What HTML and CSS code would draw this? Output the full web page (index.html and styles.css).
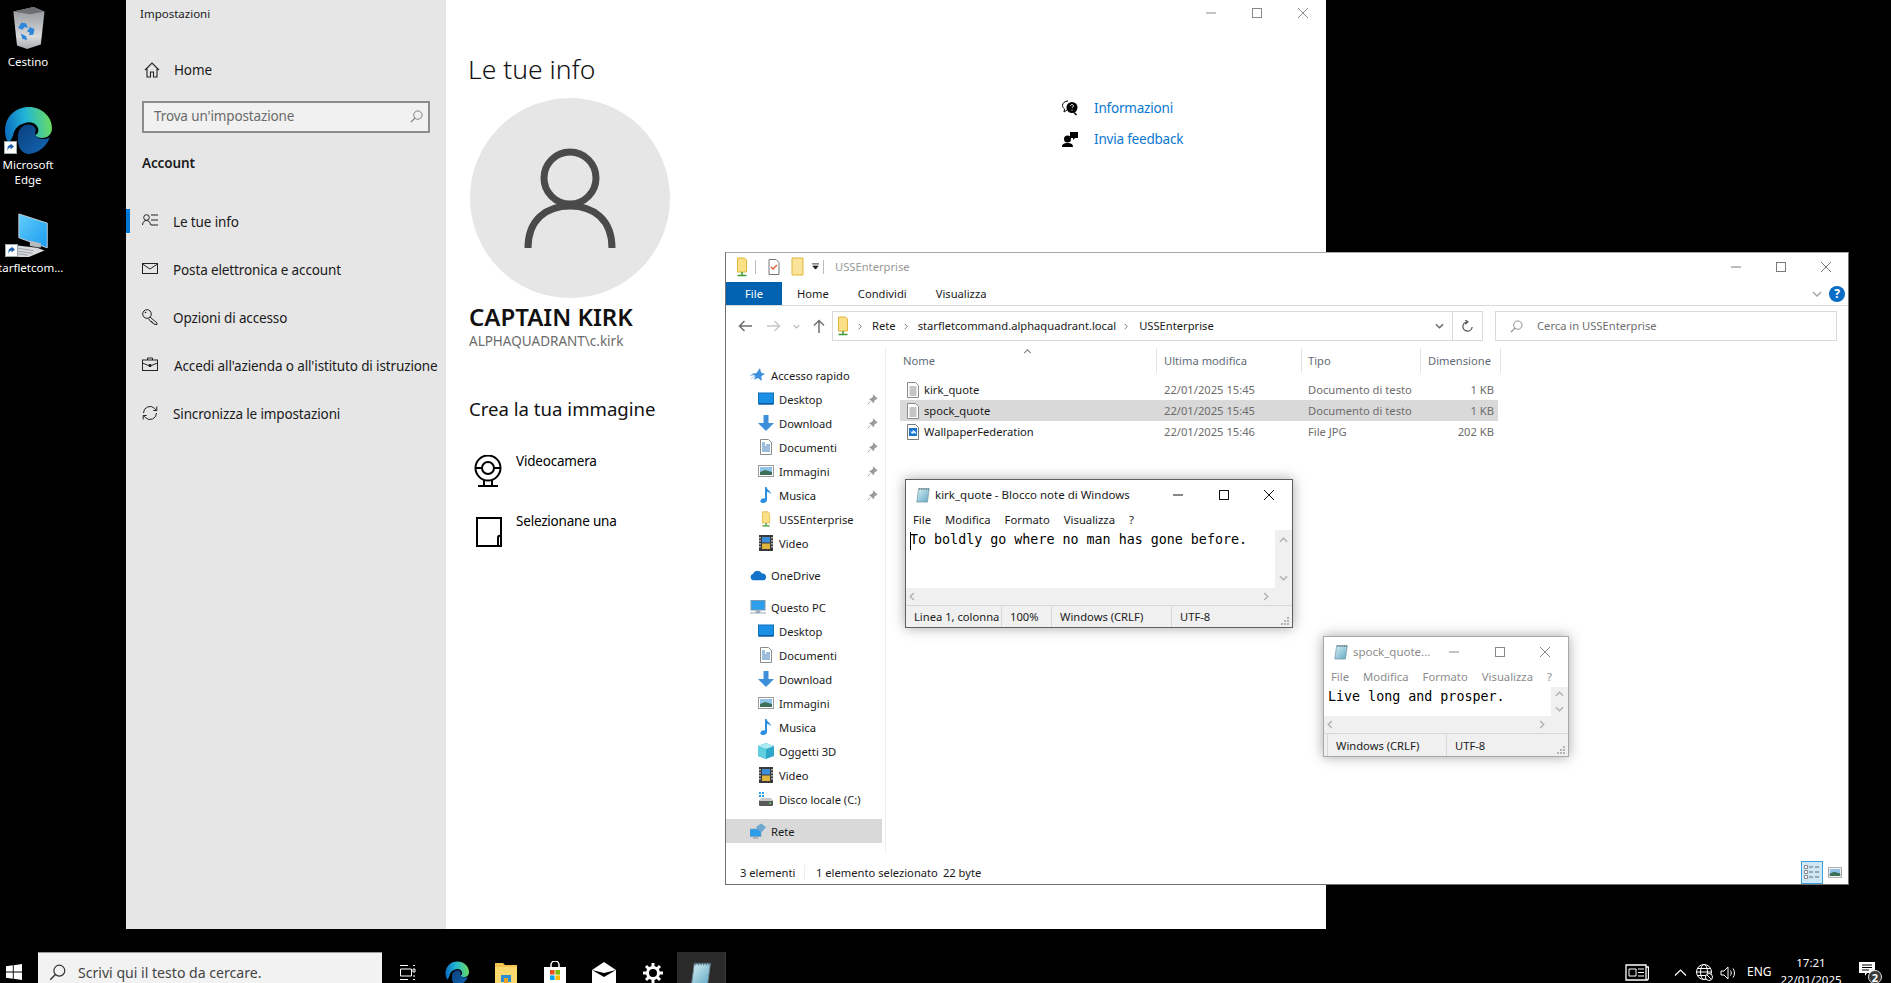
FILE: index.html
```html
<!DOCTYPE html>
<html lang="it">
<head>
<meta charset="utf-8">
<title>Desktop</title>
<link rel="stylesheet" href="styles.css">
</head>
<body>
<svg class="defs" width="0" height="0" aria-hidden="true">
  <defs>
    <linearGradient id="edgeTop" x1="0" y1="0.5" x2="1" y2="0.4"><stop offset="0" stop-color="#0c6fc0"/><stop offset="0.45" stop-color="#22b5d8"/><stop offset="1" stop-color="#6bdc5e"/></linearGradient>
    <linearGradient id="edgeLow" x1="0" y1="0" x2="1" y2="1"><stop offset="0" stop-color="#0a3f7c"/><stop offset="1" stop-color="#1368b5"/></linearGradient>
    <linearGradient id="screenGrad" x1="0" y1="0" x2="1" y2="1"><stop offset="0" stop-color="#63cdfb"/><stop offset="1" stop-color="#1a9bef"/></linearGradient>
    <linearGradient id="noteGrad" x1="0" y1="0" x2="1" y2="1"><stop offset="0" stop-color="#d6eef5"/><stop offset="1" stop-color="#62a9c4"/></linearGradient>
    <linearGradient id="binGrad" x1="0" y1="0" x2="0" y2="1"><stop offset="0" stop-color="#8d9195"/><stop offset="0.7" stop-color="#d8dadc"/><stop offset="1" stop-color="#a9acaf"/></linearGradient>
    <symbol id="i-file" viewBox="0 0 14 16"><path d="M1.5.5h8l3 3v12h-11z" fill="#fff" stroke="#8a8a8a"/><path d="M3.500 5h7M3.500 7h7M3.500 9h7M3.500 11h7M3.500 13h7" stroke="#8a8a8a"/></symbol>
    <symbol id="i-jpg" viewBox="0 0 14 16"><path d="M1.5.5h8l3 3v12h-11z" fill="#fff" stroke="#7a7a7a"/><rect x="3" y="4" width="8" height="8" fill="#1a76c8"/><path d="M4 7l2 1 1-2 3 2v2l-2-1-2 1z" fill="#d8efff"/></symbol>
    <symbol id="i-share" viewBox="0 0 12 20"><path d="M1.500 1h7l2 2v12h-9z" fill="#fbe087" stroke="#e0b63d"/><path d="M6 15v3M1.500 18.500h9" stroke="#3d9a36" stroke-width="1.500"/></symbol>
    <symbol id="i-folder" viewBox="0 0 14 20"><path d="M1 1h11v17H1z" fill="#fbe499" stroke="#e0b63d"/></symbol>
    <symbol id="i-pin" viewBox="0 0 12 12"><path d="M7 1l4 4-1.500.5-2 2-.5 2-4-4 2-.5 2-2zM3.500 8.500L1 11" fill="#9a9a9a" stroke="#9a9a9a"/></symbol>
    <symbol id="i-star" viewBox="0 0 16 16"><path d="M10 1l1 4.500 4 1.500-3.600 2 .3 5-3.700-3-4 1.700L5.500 9 1 7l5.500-1z" fill="#3d8fdc"/><path d="M1 12l4-3M0 9l3-1" stroke="#9cc7ea"/></symbol>
    <symbol id="i-desktop" viewBox="0 0 16 14"><rect x=".5" y="1" width="15" height="11" fill="#1a8fe6" stroke="#0d70bb"/><rect x="1" y="11" width="14" height="1.500" fill="#0a5d9e"/></symbol>
    <symbol id="i-download" viewBox="0 0 16 16"><path d="M5.500 0h5v8H16l-8 8-8-8h5.500z" fill="#3d8fdc"/></symbol>
    <symbol id="i-docs" viewBox="0 0 14 16"><path d="M1.500.5h8l3 3v12h-11z" fill="#fff" stroke="#8a8a8a"/><path d="M3 4h3M3 6h3M7 6h4M3 8h8M3 10h8M3 12h8" stroke="#3a7ab8"/></symbol>
    <symbol id="i-pics" viewBox="0 0 16 12"><rect x=".5" y=".5" width="15" height="11" fill="#fff" stroke="#9a9a9a"/><rect x="2" y="2" width="12" height="8" fill="#8fc3e8"/><path d="M2 7l5-2 7 2v3H2z" fill="#3f6f58"/></symbol>
    <symbol id="i-music" viewBox="0 0 12 16"><path d="M5 0h1.500c.5 3 4.500 3.500 4.500 7.500-1-2-3-2.500-4-2.500v8c0 2-2 3-4 3s-3-1-2.500-2.500S3 11 5 11.500z" fill="#2c8fe0"/></symbol>
    <symbol id="i-video" viewBox="0 0 14 16"><rect width="14" height="16" fill="#3a3a3a"/><rect x="3" y="2" width="8" height="5.500" fill="#3d8fdc"/><rect x="3" y="8.500" width="8" height="5.500" fill="#e0b63d"/><path d="M1 2v12M13 2v12" stroke="#ccc" stroke-dasharray="1.500 1.500" stroke-width="1.500"/></symbol>
    <symbol id="i-cloud" viewBox="0 0 16 11"><path d="M4 11a3.500 3.500 0 0 1-1-6.800A5 5 0 0 1 12 4a3.500 3.500 0 0 1 1 7z" fill="#1273c9"/></symbol>
    <symbol id="i-pc" viewBox="0 0 16 14"><rect x="1" y=".5" width="14" height="9.500" fill="#2c9eec" stroke="#7a9ab0"/><path d="M6 11h4v1.500H6zM0 13h16" stroke="#9ab" fill="#9ab"/></symbol>
    <symbol id="i-3d" viewBox="0 0 16 16"><path d="M8 0l8 3v10l-8 3-8-3V3z" fill="#2ea8c8"/><path d="M8 0l8 3-8 3-8-3z" fill="#aeeaf2"/><path d="M0 3l8 3v10l-8-3z" fill="#60cfe0"/></symbol>
    <symbol id="i-drive" viewBox="0 0 16 14"><rect x="1" y="8" width="14" height="6" rx="1" fill="#5a5a5a"/><path d="M3 6h10l2 3H1z" fill="#c9c9c9"/><rect x="11" y="10.500" width="2" height="1.500" fill="#5fd35f"/><path d="M1 0h2v2H1zM4 0h2v2H4zM1 3h2v2H1zM4 3h2v2H4z" fill="#2c9eec"/></symbol>
    <symbol id="i-net" viewBox="0 0 16 16"><rect x="0" y="6" width="11" height="7.500" fill="#2c9eec" stroke="#7a9ab0" stroke-width=".6"/><path d="M3 15h5" stroke="#889"/><path d="M6 4l5-3.500 5 3.500-4 5-3-1z" fill="#6fa8cf"/></symbol>
    <symbol id="i-notepad" viewBox="0 0 18 18"><path d="M4 2h12l-2 15H2z" fill="url(#noteGrad)" stroke="#6a8a98" stroke-width=".7"/><path d="M5 1.200v2M7 1.200v2M9 1.200v2M11 1.200v2M13 1.200v2M15 1.200v2" stroke="#4d6470" stroke-width=".8"/></symbol>
    <symbol id="i-shortcut" viewBox="0 0 13 13"><rect x=".5" y=".5" width="12" height="12" fill="#fff" stroke="#9aa"/><path d="M3.500 10V7c0-2 1.500-3 3-3V2.500L10 5.500 6.500 8.500V6.500C5 6.500 4 7.500 3.500 10z" fill="#1d5fa8"/></symbol>
    <symbol id="i-search" viewBox="0 0 14 14"><circle cx="8.500" cy="5.500" r="4.500" fill="none" stroke="currentColor"/><path d="M5.300 8.700L1 13" stroke="currentColor" stroke-width="1.200"/></symbol>
    <symbol id="i-up" viewBox="0 0 10 6"><path d="M1 5l4-4 4 4" fill="none" stroke="currentColor" stroke-width="1.500"/></symbol>
    <symbol id="i-down" viewBox="0 0 10 6"><path d="M1 1l4 4 4-4" fill="none" stroke="currentColor" stroke-width="1.500"/></symbol>
    <symbol id="i-left" viewBox="0 0 6 10"><path d="M5 1L1 5l4 4" fill="none" stroke="currentColor" stroke-width="1.500"/></symbol>
    <symbol id="i-right" viewBox="0 0 6 10"><path d="M1 1l4 4-4 4" fill="none" stroke="currentColor" stroke-width="1.500"/></symbol>
    <symbol id="i-min" viewBox="0 0 12 12"><path d="M1 6h10" stroke="currentColor"/></symbol>
    <symbol id="i-max" viewBox="0 0 12 12"><rect x="1.500" y="1.500" width="9" height="9" fill="none" stroke="currentColor"/></symbol>
    <symbol id="i-close" viewBox="0 0 12 12"><path d="M1 1l10 10M11 1L1 11" stroke="currentColor"/></symbol>
    <symbol id="i-grip" viewBox="0 0 10 10"><path d="M7 1h2v2H7zM4 4h2v2H4zM7 4h2v2H7zM1 7h2v2H1zM4 7h2v2H4zM7 7h2v2H7z" fill="#b5b5b5"/></symbol>
  </defs>
</svg>

<div class="desk-icon desk-icon--bin">
  <svg class="desk-glyph" viewBox="0 0 48 48"><path d="M8 6l22-5 12 5-4 36-15 5-11-4z" fill="url(#binGrad)"/><path d="M8 6l22-5 12 5-16 3z" fill="#6c7073"/><path d="M13 24l4-6 5 1 2 5-4-1-2 3zM26 23l5 2-1 6-5 1 1-3-3-1zM16 30l6 3 1 4-5-1z" fill="#2e86d8"/></svg>
  <span class="desk-label">Cestino</span>
</div>
<div class="desk-icon desk-icon--edge">
  <div class="desk-art">
    <svg class="desk-glyph" viewBox="0 0 48 48"><path d="M1 25C1 10 12 1 25 1c13 0 23 10 23 21 0 6-4 10-10 10-3 0-6-1-7-3 3-1 4-4 3-7-2-5-8-7-13-5C13 19 10 24 9 30 6 36 3 40 4 36 2 33 1 29 1 25z" fill="url(#edgeTop)"/><path d="M14 30c0-8 7-13 13-11 4 1 6 5 4 8-1 4 4 6 9 6 3 0 5-1 6-2-3 9-11 16-21 17C16 48 13 38 14 30z" fill="url(#edgeLow)"/></svg>
    <svg class="shortcut" viewBox="0 0 13 13"><use href="#i-shortcut"/></svg>
  </div>
  <span class="desk-label">Microsoft Edge</span>
</div>
<div class="desk-icon desk-icon--net">
  <div class="desk-art">
    <svg class="desk-glyph" viewBox="0 0 48 48"><path d="M14 1l31 10v27L14 27z" fill="url(#screenGrad)" stroke="#cfd6da"/><path d="M8 35l26 3 8 3-22 9-14-5-2-7z" fill="#d7dade"/><path d="M26 30l12 3v5l-12-2z" fill="#b5bbc0"/><path d="M10 38l20 3M9 41l20 3M10 44l14 2" stroke="#9aa0a5"/></svg>
    <svg class="shortcut" viewBox="0 0 13 13"><use href="#i-shortcut"/></svg>
  </div>
  <span class="desk-label desk-label--clip">starfletcom...</span>
</div>

<section class="settings">
  <aside class="side">
    <div class="side-title">Impostazioni</div>
    <div class="side-home">
      <svg class="side-icon" viewBox="0 0 16 16"><path d="M1 8l7-7 7 7M3 6.500V15h3.500v-5h3v5H13V6.500" fill="none" stroke="#222" stroke-width="1.100"/></svg>
      <span>Home</span>
    </div>
    <div class="side-search"><span>Trova un'impostazione</span><svg class="side-search-icon" width="13" height="13"><use href="#i-search"/></svg></div>
    <div class="side-head">Account</div>
    <nav class="side-list">
      <div class="side-item side-item--on">
        <svg class="side-icon" viewBox="0 0 16 16"><circle cx="4.500" cy="4.500" r="2.800" fill="none" stroke="#222"/><path d="M.5 12c0-3 2-4.500 4-4.500s4 1.500 4 4.500M9 2h7M9 7h7M9 12h7" fill="none" stroke="#222"/></svg>
        <span>Le tue info</span>
      </div>
      <div class="side-item">
        <svg class="side-icon" viewBox="0 0 16 16"><rect x=".5" y="2.500" width="15" height="10" fill="none" stroke="#222"/><path d="M.5 3l7.500 5 7.500-5" fill="none" stroke="#222"/></svg>
        <span>Posta elettronica e account</span>
      </div>
      <div class="side-item">
        <svg class="side-icon" viewBox="0 0 16 16"><circle cx="5" cy="5" r="4.300" fill="none" stroke="#222"/><path d="M8 8l7 6v1.500h-2.500l-1-1.500H10v-1.500H8.500L6.500 9.500" fill="none" stroke="#222"/><circle cx="3.500" cy="3.500" r=".8" fill="#222"/></svg>
        <span>Opzioni di accesso</span>
      </div>
      <div class="side-item">
        <svg class="side-icon" viewBox="0 0 16 16"><rect x=".5" y="3" width="15" height="10.500" fill="none" stroke="#222"/><path d="M5.500 3V1h5v2M.5 6l6 2.500h3L15.500 6M7 7.500h2v2H7z" fill="none" stroke="#222"/></svg>
        <span class="side-wide">Accedi all'azienda o all'istituto di istruzione</span>
      </div>
      <div class="side-item">
        <svg class="side-icon" viewBox="0 0 16 16"><path d="M1.500 8a6.500 6.500 0 0 1 11-4.700l2 2M14.500 8a6.500 6.500 0 0 1-11 4.700l-2-2M14.800 1.500v4h-3.500M1.200 14.500v-4h3.500" fill="none" stroke="#222"/></svg>
        <span>Sincronizza le impostazioni</span>
      </div>
    </nav>
  </aside>
  <main class="info">
    <div class="win-btns win-btns--settings">
      <svg width="12" height="12"><use href="#i-min"/></svg>
      <svg width="12" height="12"><use href="#i-max"/></svg>
      <svg width="12" height="12"><use href="#i-close"/></svg>
    </div>
    <div class="info-body">
      <div class="info-left">
        <h1 class="info-title">Le tue info</h1>
        <div class="avatar">
          <svg class="avatar-glyph" viewBox="0 0 92 100"><circle cx="46" cy="30" r="26" fill="none" stroke="#4a4a4a" stroke-width="7"/><path d="M4 100c0-28 18-42 42-42s42 14 42 42" fill="none" stroke="#4a4a4a" stroke-width="7"/></svg>
        </div>
        <div class="user-name">CAPTAIN KIRK</div>
        <div class="user-domain">ALPHAQUADRANT\c.kirk</div>
        <h2 class="pic-title">Crea la tua immagine</h2>
        <div class="pic-opt">
          <svg class="pic-icon" viewBox="0 0 32 32"><circle cx="16" cy="13" r="12.500" fill="none" stroke="#000" stroke-width="2"/><circle cx="16" cy="13" r="6" fill="none" stroke="#000" stroke-width="2"/><path d="M3.500 13h6.500M22 13h6.500M12 25v6M20 25v6M6 31h20" stroke="#000" stroke-width="2"/></svg>
          <span>Videocamera</span>
        </div>
        <div class="pic-opt">
          <svg class="pic-icon" viewBox="0 0 32 32"><path d="M29 21V3H5v28h24v-10zM29 31h-3V23c0-3 3-3 3 0" fill="none" stroke="#000" stroke-width="2"/></svg>
          <span>Selezionane una</span>
        </div>
      </div>
      <div class="info-links">
        <a class="help-link">
          <svg class="help-icon" viewBox="0 0 16 16"><path d="M6 1C3 1 .5 3 .5 5.500c0 1.500 1 2.800 2 3.500L2 12l3-2" fill="none" stroke="#000"/><circle cx="10" cy="7.500" r="5.500"/><path d="M12 12.500l2.500 2.500" stroke="#000" stroke-width="1.500"/><path d="M8.500 6c0-2 3-2 3 0 0 1-1.500 1-1.500 2M10 9.500v1" stroke="#fff" fill="none"/></svg>
          <span>Informazioni</span>
        </a>
        <a class="help-link">
          <svg class="help-icon" viewBox="0 0 16 16"><circle cx="5.500" cy="8" r="3.500"/><path d="M0 16c0-3 2-4 5.500-4s5.500 1 5.500 4zM8 1h8v6h-3l-2 2V7H8z"/></svg>
          <span>Invia feedback</span>
        </a>
      </div>
    </div>
  </main>
</section>

<section class="explorer">
  <header class="ex-title">
    <svg class="ex-q1" width="12" height="20"><use href="#i-share"/></svg>
    <span class="ex-sep"></span>
    <svg class="ex-q2" viewBox="0 0 12 16"><path d="M1 .5h7l3 3V15.500H1z" fill="#fff" stroke="#777"/><path d="M3 8l2 2 4-4" fill="none" stroke="#e0552b" stroke-width="1.300"/></svg>
    <svg class="ex-q3" width="14" height="20"><use href="#i-folder"/></svg>
    <svg class="ex-q4" viewBox="0 0 8 8"><path d="M0 1h8M1 3.500h6L4 7z" stroke="#222" fill="#222"/></svg>
    <span class="ex-sep"></span>
    <span class="ex-name">USSEnterprise</span>
    <div class="win-btns win-btns--explorer">
      <svg width="12" height="12"><use href="#i-min"/></svg>
      <svg width="12" height="12"><use href="#i-max"/></svg>
      <svg width="12" height="12"><use href="#i-close"/></svg>
    </div>
  </header>
  <div class="ex-tabs">
    <span class="ex-tab ex-tab--file">File</span>
    <span class="ex-tab ex-tab--home">Home</span>
    <span class="ex-tab ex-tab--share">Condividi</span>
    <span class="ex-tab ex-tab--view">Visualizza</span>
    <svg class="ex-collapse" width="10" height="6"><use href="#i-down"/></svg>
    <span class="ex-help">?</span>
  </div>
  <div class="ex-bar">
    <svg class="ex-arrow" viewBox="0 0 14 12"><path d="M14 6H1.500M6.500 1L1.500 6l5 5" fill="none" stroke="#6e6e6e" stroke-width="1.500"/></svg>
    <svg class="ex-arrow ex-arrow--off" viewBox="0 0 14 12"><path d="M0 6h12.500M7.500 1l5 5-5 5" fill="none" stroke="#c8c8c8" stroke-width="1.500"/></svg>
    <svg class="ex-recent" width="7" height="5"><use href="#i-down"/></svg>
    <svg class="ex-arrow ex-arrow--up" viewBox="0 0 12 14"><path d="M6 14V1.500M1 6.500l5-5 5 5" fill="none" stroke="#6e6e6e" stroke-width="1.500"/></svg>
    <div class="ex-path">
      <svg class="ex-path-icon" width="12" height="20"><use href="#i-share"/></svg>
      <svg class="crumb" width="4" height="7"><use href="#i-right"/></svg>
      <span class="ex-crumb-text">Rete</span>
      <svg class="crumb" width="4" height="7"><use href="#i-right"/></svg>
      <span class="ex-crumb-text">starfletcommand.alphaquadrant.local</span>
      <svg class="crumb crumb--last" width="4" height="7"><use href="#i-right"/></svg>
      <span class="ex-crumb-text">USSEnterprise</span>
      <span class="ex-path-fill"></span>
      <svg class="ex-path-drop" width="9" height="6"><use href="#i-down"/></svg>
      <span class="ex-path-refresh">
        <svg width="13" height="13" viewBox="0 0 14 14"><path d="M12 7.500a5 5 0 1 1-5-5.500M4.500 0l3 2-3 2.500" fill="none" stroke="#555" stroke-width="1.300"/></svg>
      </span>
    </div>
    <div class="ex-search"><svg width="13" height="13"><use href="#i-search"/></svg><span class="ex-crumb-text">Cerca in USSEnterprise</span></div>
  </div>
  <div class="ex-content">
    <nav class="tree">
      <div class="tree-group">
        <div class="tree-row tree-row--root"><svg class="t-i" viewBox="0 0 16 16"><use href="#i-star"/></svg><span>Accesso rapido</span></div>
        <div class="tree-row"><svg class="t-i" viewBox="0 0 16 14"><use href="#i-desktop"/></svg><span>Desktop</span><svg class="pin" width="11" height="11"><use href="#i-pin"/></svg></div>
        <div class="tree-row"><svg class="t-i" viewBox="0 0 16 16"><use href="#i-download"/></svg><span>Download</span><svg class="pin" width="11" height="11"><use href="#i-pin"/></svg></div>
        <div class="tree-row"><svg class="t-i" viewBox="0 0 14 16"><use href="#i-docs"/></svg><span>Documenti</span><svg class="pin" width="11" height="11"><use href="#i-pin"/></svg></div>
        <div class="tree-row"><svg class="t-i" viewBox="0 0 16 12"><use href="#i-pics"/></svg><span>Immagini</span><svg class="pin" width="11" height="11"><use href="#i-pin"/></svg></div>
        <div class="tree-row"><svg class="t-i" viewBox="0 0 12 16"><use href="#i-music"/></svg><span>Musica</span><svg class="pin" width="11" height="11"><use href="#i-pin"/></svg></div>
        <div class="tree-row"><svg class="t-i" viewBox="0 0 12 20"><use href="#i-share"/></svg><span>USSEnterprise</span></div>
        <div class="tree-row"><svg class="t-i" viewBox="0 0 14 16"><use href="#i-video"/></svg><span>Video</span></div>
      </div>
      <div class="tree-group">
        <div class="tree-row tree-row--root"><svg class="t-i" viewBox="0 0 16 11"><use href="#i-cloud"/></svg><span>OneDrive</span></div>
      </div>
      <div class="tree-group">
        <div class="tree-row tree-row--root"><svg class="t-i" viewBox="0 0 16 14"><use href="#i-pc"/></svg><span>Questo PC</span></div>
        <div class="tree-row"><svg class="t-i" viewBox="0 0 16 14"><use href="#i-desktop"/></svg><span>Desktop</span></div>
        <div class="tree-row"><svg class="t-i" viewBox="0 0 14 16"><use href="#i-docs"/></svg><span>Documenti</span></div>
        <div class="tree-row"><svg class="t-i" viewBox="0 0 16 16"><use href="#i-download"/></svg><span>Download</span></div>
        <div class="tree-row"><svg class="t-i" viewBox="0 0 16 12"><use href="#i-pics"/></svg><span>Immagini</span></div>
        <div class="tree-row"><svg class="t-i" viewBox="0 0 12 16"><use href="#i-music"/></svg><span>Musica</span></div>
        <div class="tree-row"><svg class="t-i" viewBox="0 0 16 16"><use href="#i-3d"/></svg><span>Oggetti 3D</span></div>
        <div class="tree-row"><svg class="t-i" viewBox="0 0 14 16"><use href="#i-video"/></svg><span>Video</span></div>
        <div class="tree-row"><svg class="t-i" viewBox="0 0 16 14"><use href="#i-drive"/></svg><span>Disco locale (C:)</span></div>
      </div>
      <div class="tree-group">
        <div class="tree-row tree-row--root tree-row--on"><svg class="t-i" viewBox="0 0 16 16"><use href="#i-net"/></svg><span>Rete</span></div>
      </div>
    </nav>
    <div class="files">
      <svg class="sort-caret" width="9" height="5"><use href="#i-up"/></svg>
      <div class="file-grid file-grid--head">
        <span>Nome</span><span>Ultima modifica</span><span>Tipo</span><span>Dimensione</span>
      </div>
      <div class="file-grid file-grid--row">
        <span class="file-name"><svg width="14" height="16"><use href="#i-file"/></svg>kirk_quote</span><span>22/01/2025 15:45</span><span>Documento di testo</span><span class="file-size">1 KB</span>
      </div>
      <div class="file-grid file-grid--row file-grid--on">
        <span class="file-name"><svg width="14" height="16"><use href="#i-file"/></svg>spock_quote</span><span>22/01/2025 15:45</span><span>Documento di testo</span><span class="file-size">1 KB</span>
      </div>
      <div class="file-grid file-grid--row">
        <span class="file-name"><svg width="14" height="16"><use href="#i-jpg"/></svg>WallpaperFederation</span><span>22/01/2025 15:46</span><span>File JPG</span><span class="file-size">202 KB</span>
      </div>
    </div>
  </div>
  <footer class="ex-status">
    <span class="ex-count">3 elementi</span>
    <span class="ex-selected">1 elemento selezionato</span>
    <span>22 byte</span>
    <span class="ex-views">
      <span class="ex-view ex-view--on"><svg width="16" height="14" viewBox="0 0 16 14"><path d="M.5.5h3v3h-3zM.5 5.500h3v3h-3zM.5 10.500h3v3h-3z" fill="#fff" stroke="#888"/><path d="M5 2h4M11 2h4M5 7h4M11 7h4M5 12h4M11 12h4" stroke="#666"/></svg></span>
      <span class="ex-view"><svg width="14" height="11"><use href="#i-pics"/></svg></span>
    </span>
  </footer>
</section>

<section class="notepad notepad--kirk">
  <header class="np-title">
    <svg class="np-icon" width="16" height="16"><use href="#i-notepad"/></svg>
    <span class="np-name">kirk_quote - Blocco note di Windows</span>
    <div class="win-btns win-btns--np">
      <svg width="12" height="12"><use href="#i-min"/></svg>
      <svg width="12" height="12"><use href="#i-max"/></svg>
      <svg width="12" height="12"><use href="#i-close"/></svg>
    </div>
  </header>
  <div class="np-menu"><span>File</span><span>Modifica</span><span>Formato</span><span>Visualizza</span><span>?</span></div>
  <div class="np-edit">
    <div class="np-text"><span class="caret"></span>To boldly go where no man has gone before.</div>
    <div class="np-vscroll"><svg width="9" height="6"><use href="#i-up"/></svg><svg width="9" height="6"><use href="#i-down"/></svg></div>
  </div>
  <div class="np-hscroll"><svg width="6" height="9"><use href="#i-left"/></svg><svg width="6" height="9"><use href="#i-right"/></svg></div>
  <footer class="np-status">
    <span class="np-cell np-cell--pos">Linea 1, colonna</span>
    <span class="np-cell np-cell--zoom">100%</span>
    <span class="np-cell np-cell--eol">Windows (CRLF)</span>
    <span class="np-cell np-cell--enc">UTF-8</span>
    <svg class="np-grip" width="10" height="10"><use href="#i-grip"/></svg>
  </footer>
</section>

<section class="notepad notepad--spock">
  <header class="np-title">
    <svg class="np-icon" width="16" height="16"><use href="#i-notepad"/></svg>
    <span class="np-name">spock_quote...</span>
    <div class="win-btns win-btns--np">
      <svg width="12" height="12"><use href="#i-min"/></svg>
      <svg width="12" height="12"><use href="#i-max"/></svg>
      <svg width="12" height="12"><use href="#i-close"/></svg>
    </div>
  </header>
  <div class="np-menu"><span>File</span><span>Modifica</span><span>Formato</span><span>Visualizza</span><span>?</span></div>
  <div class="np-edit">
    <div class="np-text">Live long and prosper.</div>
    <div class="np-vscroll"><svg width="9" height="6"><use href="#i-up"/></svg><svg width="9" height="6"><use href="#i-down"/></svg></div>
  </div>
  <div class="np-hscroll"><svg width="6" height="9"><use href="#i-left"/></svg><svg width="6" height="9"><use href="#i-right"/></svg></div>
  <footer class="np-status">
    <span class="np-cell np-cell--lead"></span>
    <span class="np-cell np-cell--eol2">Windows (CRLF)</span>
    <span class="np-cell np-cell--enc">UTF-8</span>
    <svg class="np-grip" width="10" height="10"><use href="#i-grip"/></svg>
  </footer>
</section>

<footer class="taskbar">
  <svg class="tb-start" viewBox="0 0 16 16"><path d="M0 2.300L6.800 1.300V7.500H0zM7.700 1.200L16 0v7.500H7.700zM0 8.400h6.800v6.300L0 13.700zM7.700 8.400H16V16l-8.300-1.200z" fill="#fff"/></svg>
  <div class="tb-search"><svg class="tb-search-icon" width="17" height="17"><use href="#i-search"/></svg><span>Scrivi qui il testo da cercare.</span></div>
  <div class="tb-apps">
    <span class="tb-app"><svg width="17" height="17" viewBox="0 0 17 17"><path d="M1 1.500h8M1 15.500h8M1.500 5h11v7h-11zM14 1.500h2M14 5h2v3h-2zM14 12h2M14 15.500h2" fill="none" stroke="#fff"/></svg></span>
    <span class="tb-app"><svg width="24" height="24" viewBox="0 0 48 48"><path d="M1 25C1 10 12 1 25 1c13 0 23 10 23 21 0 6-4 10-10 10-3 0-6-1-7-3 3-1 4-4 3-7-2-5-8-7-13-5C13 19 10 24 9 30 6 36 3 40 4 36 2 33 1 29 1 25z" fill="url(#edgeTop)"/><path d="M14 30c0-8 7-13 13-11 4 1 6 5 4 8-1 4 4 6 9 6 3 0 5-1 6-2-3 9-11 16-21 17C16 48 13 38 14 30z" fill="url(#edgeLow)"/></svg></span>
    <span class="tb-app"><svg width="22" height="22" viewBox="0 0 22 22"><path d="M0 1h8l2 2h12v19H0z" fill="#f2c44e"/><path d="M0 5h22v17H0z" fill="#fbd96f"/><path d="M6 20v-7h10v7h-3v-4H9v4z" fill="#2b8fd8"/><rect x="9" y="16" width="4" height="6" fill="#e8a01e"/></svg></span>
    <span class="tb-app"><svg width="22" height="24" viewBox="0 0 22 24"><path d="M7 6V4a4 4 0 0 1 8 0v2" fill="none" stroke="#fff" stroke-width="1.500"/><path d="M0 6h22v18H0z" fill="#fff"/><rect x="6" y="9" width="4.600" height="4.600" fill="#f25022"/><rect x="11.400" y="9" width="4.600" height="4.600" fill="#7fba00"/><rect x="6" y="14.400" width="4.600" height="4.600" fill="#00a4ef"/><rect x="11.400" y="14.400" width="4.600" height="4.600" fill="#ffb900"/></svg></span>
    <span class="tb-app"><svg width="24" height="22" viewBox="0 0 24 22"><path d="M0 8L12 0l12 8v14H0z" fill="#fff"/><path d="M0 8l12 7 12-7-12 3z" fill="#000"/></svg></span>
    <span class="tb-app"><svg width="20" height="20" viewBox="0 0 20 20"><circle cx="10" cy="10" r="5.500" fill="none" stroke="#fff" stroke-width="3"/><path d="M10 0v4M10 16v4M0 10h4M16 10h4M3 3l3 3M14 14l3 3M17 3l-3 3M6 14l-3 3" stroke="#fff" stroke-width="3"/></svg></span>
    <span class="tb-app tb-app--on"><svg width="24" height="24"><use href="#i-notepad"/></svg></span>
  </div>
  <div class="tray">
    <svg class="tray-news" width="24" height="17" viewBox="0 0 24 17"><path d="M1 1h20v15H1zM21 3h2.500v11a2 2 0 0 1-2.500 2" fill="none" stroke="#fff" stroke-width="1.300"/><path d="M4 5h7v7H4zM13 5h6M13 8.500h6M13 12h6" fill="none" stroke="#fff"/></svg>
    <svg class="tray-caret" width="13" height="7" viewBox="0 0 13 7"><path d="M1 6.500l5.500-5.500 5.500 5.500" fill="none" stroke="#fff" stroke-width="1.200"/></svg>
    <svg class="tray-globe" width="17" height="17" viewBox="0 0 17 17"><circle cx="8" cy="8" r="7.500" fill="none" stroke="#fff"/><ellipse cx="8" cy="8" rx="3.500" ry="7.500" fill="none" stroke="#fff"/><path d="M.5 8h15M1.500 4.500h13M1.500 11.500h13" stroke="#fff"/><circle cx="13" cy="13" r="3.500" fill="#000" stroke="#fff"/><path d="M11 11l4 4" stroke="#fff"/></svg>
    <svg class="tray-sound" width="17" height="14" viewBox="0 0 17 14"><path d="M1 5h3l4-4v12L4 9H1z" fill="none" stroke="#fff"/><path d="M10.500 4.500c1 1.500 1 3.500 0 5M13 2.500c2 2.500 2 6.500 0 9" fill="none" stroke="#fff"/></svg>
    <span class="tray-lang">ENG</span>
    <span class="tray-clock"><span>17:21</span><span>22/01/2025</span></span>
    <span class="tray-note">
      <svg width="16" height="14" viewBox="0 0 16 14"><path d="M0 0h16v11H8l-2 3v-3H0z" fill="#fff"/><path d="M3 3h10M3 5.500h10M3 8h7" stroke="#000"/></svg>
      <span class="tray-badge">2</span>
    </span>
  </div>
</footer>
</body>
</html>
```

FILE: styles.css
```css
* { box-sizing: border-box; }
html, body { margin: 0; padding: 0; }
body {
  position: relative;
  width: 1891px;
  height: 983px;
  overflow: hidden;
  background: #000;
  font-family: "Noto Sans", "Liberation Sans", sans-serif;
  color: #000;
}
.defs { position: absolute; }
svg { display: block; flex: none; }

/* desktop icons */
.desk-icon { position: absolute; width: 72px; left: -8px; display: flex; flex-direction: column; align-items: center; text-align: center; }
.desk-icon--bin { top: 6px; }
.desk-icon--edge { top: 106px; }
.desk-icon--net { top: 213px; }
.desk-art { position: relative; }
.desk-glyph { width: 48px; height: 48px; }
.desk-icon--bin .desk-glyph { width: 44px; height: 44px; }
.desk-icon--net .desk-glyph { width: 46px; height: 44px; }
.shortcut { position: absolute; left: 0; bottom: 0; width: 13px; height: 13px; }
.desk-label { color: #fff; font-size: 11.5px; line-height: 15px; margin-top: 4px; width: 64px; }
.desk-icon--edge .desk-label { margin-top: 4px; line-height: 14.500px; }
.desk-icon--net .desk-label { margin-top: 3px; }
.desk-label--clip { white-space: nowrap; width: auto; }

/* settings */
.settings { position: absolute; left: 126px; top: 0; width: 1200px; height: 929px; display: flex; background: #fff; }
.side { width: 320px; background: #e6e6e6; position: relative; display: flex; flex-direction: column; padding-left: 16px; color: #1a1a1a; font-size: 13.500px; letter-spacing: -.13px; }
.side-title { font-size: 11.5px; height: 28px; line-height: 28px; margin-left: -2px; letter-spacing: 0; }
.side-home { display: flex; align-items: center; height: 28px; margin-top: 28px; }
.side-home span { margin-left: 14px; }
.side-home .side-icon { margin-left: 2px; }
.side-icon { width: 16px; height: 16px; }
.side-search { width: 288px; height: 32px; margin-top: 17px; border: 2px solid #8d8d8d; background: #f1f1f1; display: flex; align-items: center; justify-content: space-between; padding: 0 5px 2px 10px; color: #6a6a6a; }
.side-search-icon { color: #777; }
.side-head { font-weight: 600; margin-top: 19px; height: 22px; line-height: 22px; }
.side-list { margin-top: 24px; display: flex; flex-direction: column; }
.side-item { height: 48px; display: flex; align-items: center; gap: 15px; position: relative; }
.side-item .side-icon { margin-top: -2px; }
.side-wide { margin-left: 1px; white-space: nowrap; }
.side-item--on::before { content: ""; position: absolute; left: -16px; top: 11px; width: 4px; height: 24px; background: #0078d7; }

.info { flex: 1; display: flex; flex-direction: column; }
.win-btns { display: flex; align-items: center; color: #777; }
.win-btns--settings { height: 26px; justify-content: flex-end; gap: 34px; padding-right: 17px; color: #8a8a8a; }
.info-body { display: flex; flex: 1; }
.info-left { width: 616px; padding-left: 22px; display: flex; flex-direction: column; align-items: flex-start; }
.info-title { margin: 23px 0 0; font-size: 26.500px; font-weight: 300; line-height: 40px; color: #111; }
.avatar { width: 200px; height: 200px; margin: 9px 0 0 2px; border-radius: 50%; background: #e6e6e6; display: flex; align-items: center; justify-content: center; }
.avatar-glyph { width: 92px; height: 100px; }
.user-name { margin: 2px 0 0 1px; font-size: 24px; font-weight: 600; line-height: 34px; color: #111; }
.user-domain { margin: -2px 0 0 1px; font-size: 13.500px; line-height: 18px; color: #6b6b6b; }
.pic-title { margin: 45px 0 0 1px; font-size: 18.600px; font-weight: 400; line-height: 28px; color: #111; }
.pic-opt { height: 60px; display: flex; gap: 12px; font-size: 13.500px; letter-spacing: -.2px; line-height: 18px; margin-left: 4px; }
.pic-title + .pic-opt { margin-top: 29px; }
.pic-icon { width: 32px; height: 32px; margin-top: 3px; }
.info-links { padding-top: 70px; display: flex; flex-direction: column; gap: 7px; }
.help-link { display: flex; align-items: center; height: 24px; gap: 16px; color: #0a78d2; font-size: 13.500px; letter-spacing: -.2px; }
.help-icon { width: 16px; height: 16px; }

/* explorer */
.explorer { position: absolute; left: 725px; top: 252px; width: 1124px; height: 633px; background: #fff; border: 1px solid #6f6f6f; border-top-color: #a8a8a8; display: flex; flex-direction: column; font-size: 11.200px; color: #1a1a1a; }
.ex-title { height: 29px; flex: none; display: flex; align-items: center; padding: 0 0 2px 10px; color: #999; }
.ex-sep { width: 1px; height: 14px; background: #bcbcbc; }
.ex-q1 { margin-right: 7px; }
.ex-q2 { width: 12px; height: 16px; margin: 0 11px 0 12px; }
.ex-q3 { margin-right: 7px; }
.ex-q4 { width: 7px; height: 7px; margin-right: 4px; }
.ex-name { margin-left: 11px; }
.win-btns--explorer { margin-left: auto; gap: 33px; padding-right: 16px; color: #7a7a7a; }
.ex-tabs { height: 24px; flex: none; display: flex; align-items: center; border-bottom: 1px solid #dadada; position: relative; }
.ex-tab { white-space: nowrap; }
.ex-tab--file { width: 56px; height: 23px; background: #0063b1; color: #fff; text-align: center; line-height: 23px; }
.ex-tab--home { margin-left: 15px; }
.ex-tab--share { margin-left: 29px; }
.ex-tab--view { margin-left: 29px; }
.ex-collapse { margin-left: auto; color: #a8a8a8; }
.ex-help { width: 16px; height: 16px; margin: 0 3px 0 7px; border-radius: 50%; background: #0a6cc4; color: #fff; font-weight: 700; font-size: 12px; line-height: 16px; text-align: center; }
.ex-bar { height: 41px; flex: none; display: flex; align-items: flex-start; padding-top: 5px; position: relative; }
.ex-arrow { width: 14px; height: 12px; margin: 9px 0 0 12px; }
.ex-arrow--off { margin-left: 15px; }
.ex-recent { margin: 12.500px 0 0 12px; color: #b4b4b4; }
.ex-arrow--up { width: 12px; height: 14px; margin: 8px 0 0 13px; }
.ex-path { width: 651px; height: 30px; margin-left: 7px; border: 1px solid #d9d9d9; display: flex; align-items: center; padding-left: 4px; white-space: nowrap; }
.ex-path-icon { margin-right: 1px; }
.ex-crumb-text { margin-top: -2px; }
.crumb { color: #777; margin: 0 10px 0 8px; }
.crumb--last { margin-right: 11px; }
.ex-path-fill { flex: 1; }
.ex-path-drop { color: #666; margin-right: 8px; }
.ex-path-refresh { width: 30px; height: 100%; border-left: 1px solid #d9d9d9; display: flex; align-items: center; justify-content: center; }
.ex-search { width: 342px; height: 30px; margin-left: 12px; border: 1px solid #d9d9d9; display: flex; align-items: center; gap: 14px; padding-left: 14px; color: #6e6e6e; }
.ex-search svg { color: #888; }
.ex-content { flex: 1; display: flex; min-height: 0; }
.tree { width: 160px; border-right: 1px solid #eee; padding-top: 16px; margin-bottom: 4px; }
.tree-group { padding-bottom: 8px; }
.tree-row { height: 24px; display: flex; align-items: center; padding-left: 32px; position: relative; white-space: nowrap; }
.tree-row--root { padding-left: 24px; }
.t-i { width: 16px; height: 16px; margin-right: 5px; }
.tree-row--on { background: #d9d9d9; width: 156px; }
.pin { position: absolute; left: 141px; top: 6.500px; }
.files { flex: 1; position: relative; padding: 1px 0 0 14px; }
.sort-caret { position: absolute; left: 137px; top: 2px; color: #888; }
.file-grid { display: grid; grid-template-columns: 257px 145px 119px 80px; align-items: center; width: 601px; white-space: nowrap; color: #6d6d6d; }
.file-grid > span { padding-left: 7px; }
.file-grid > span:nth-child(3) { padding-left: 6px; }
.file-grid--head { height: 25px; color: #5f6b78; margin-bottom: 6px; }
.file-grid--head > span { height: 25px; line-height: 25px; border-right: 1px solid #e5e5e5; }
.file-grid--head > span:first-child { padding-left: 3px; }
.file-grid--row { height: 21px; width: 598px; grid-template-columns: 257px 145px 119px 77px; }
.file-grid--on { background: #d9d9d9; }
.file-grid > .file-name { display: flex; align-items: center; gap: 4px; color: #1a1a1a; padding-left: 6px; }
.file-grid > .file-size { text-align: right; padding-right: 4px; padding-left: 0; }
.ex-status { height: 26px; flex: none; display: flex; align-items: center; padding-left: 14px; padding-top: 2px; position: relative; }
.ex-count { width: 65px; border-right: 1px solid #eee; }
.ex-selected { margin: 0 5px 0 11px; }
.ex-views { margin-left: auto; display: flex; align-items: center; gap: 1px; padding-right: 2px; }
.ex-view { display: flex; align-items: center; justify-content: center; width: 22px; height: 23px; }
.ex-view--on { background: #cce8f7; border: 1px solid #3ea0d8; }

/* notepad */
.notepad { position: absolute; background: #f0f0f0; border: 1px solid #6f6f6f; box-shadow: 0 0 12px rgba(0, 0, 0, .35); display: flex; flex-direction: column; font-size: 11.500px; color: #1a1a1a; }
.notepad--kirk { left: 905px; top: 479px; width: 388px; height: 149px; border-color: #5f5f5f; }
.notepad--spock { left: 1323px; top: 636px; width: 246px; height: 121px; border-color: #a8a8a8; }
.np-title { height: 29px; flex: none; background: #fff; display: flex; align-items: center; padding-left: 9px; gap: 4px; white-space: nowrap; }
.np-name { flex: 1; }
.win-btns--np { gap: 33.500px; padding-right: 17px; color: #111; }
.np-menu { height: 21px; flex: none; background: #fff; display: flex; align-items: center; padding-left: 7px; gap: 14px; font-size: 11.300px; }
.np-edit { display: flex; flex: none; }
.np-text { flex: 1; background: #fff; padding: 2px 0 0 4px; font-family: "DejaVu Sans Mono", "Liberation Mono", monospace; font-size: 13.340px; line-height: 16px; color: #000; white-space: pre; position: relative; }
.caret { position: absolute; left: 4px; top: 2px; width: 1px; height: 18px; background: #000; }
.np-vscroll { width: 17px; color: #b0b0b0; display: flex; flex-direction: column; align-items: center; justify-content: space-between; padding: 7px 0; }
.np-hscroll { height: 17px; flex: none; display: flex; align-items: center; justify-content: space-between; padding: 0 23px 0 3px; color: #b0b0b0; }
.np-status { flex: 1; border-top: 1px solid #d7d7d7; display: flex; align-items: center; position: relative; font-size: 11.200px; }
.np-cell { height: 100%; display: flex; align-items: center; padding-left: 8px; border-left: 1px solid #d7d7d7; white-space: nowrap; }
.np-cell:first-child { border-left: 0; }
.np-cell--pos { width: 95px; }
.np-cell--zoom { width: 50px; }
.np-cell--eol { width: 120px; }
.np-cell--lead { width: 4px; padding: 0; }
.np-cell--eol2 { width: 119px; }
.np-grip { position: absolute; right: 2px; bottom: 1px; }
.notepad--kirk .np-edit { height: 58px; }
.notepad--spock .np-edit { height: 29px; }
.notepad--spock .np-vscroll { padding: 4px 0; }
.notepad--spock .np-title, .notepad--spock .np-menu { color: #8c8c8c; }
.notepad--spock .win-btns--np { color: #888; }
.notepad--spock .np-cell--lead { border-right: 1px solid #d7d7d7; }
.notepad--spock .np-cell--eol2 { border-left: 0; border-right: 1px solid #d7d7d7; }
.notepad--spock .np-cell--enc { border-left: 0; }

/* taskbar */
.taskbar { position: absolute; left: 0; top: 952px; width: 1891px; height: 48px; display: flex; color: #fff; }
.tb-start { width: 16px; height: 16px; margin: 12px 16px 0 6px; }
.tb-search { width: 344px; height: 48px; background: #f2f2f2; border-top: 1px solid #999; color: #444; display: flex; gap: 12px; padding: 11px 0 0 11px; font-size: 14.100px; line-height: 18px; }
.tb-search-icon { color: #333; }
.tb-apps { display: flex; padding-left: 1px; }
.tb-app { width: 49px; height: 41px; display: flex; align-items: center; justify-content: center; }
.tb-app--on { background: #2b2b2b; border-right: 1px solid #3a3a3a; }
.tray { margin-left: auto; display: flex; align-items: flex-start; height: 48px; }
.tray-news { margin: 12px 25px 0 0; }
.tray-caret { margin: 17px 9px 0 0; }
.tray-globe { margin: 12px 7px 0 0; }
.tray-sound { margin: 14px 10px 0 0; }
.tray-lang { font-size: 12px; line-height: 16px; margin: 12px 0 0 0; width: 31px; }
.tray-clock { display: flex; flex-direction: column; align-items: center; width: 66px; margin-top: 2px; font-size: 11.500px; line-height: 17px; }
.tray-note { position: relative; width: 47px; padding: 10px 0 0 15px; }
.tray-badge { position: absolute; left: 24px; top: 18px; width: 14px; height: 14px; border-radius: 50%; background: #3a3a3a; border: 1px solid #ddd; font-size: 11px; font-weight: 700; line-height: 13px; text-align: center; }
```
